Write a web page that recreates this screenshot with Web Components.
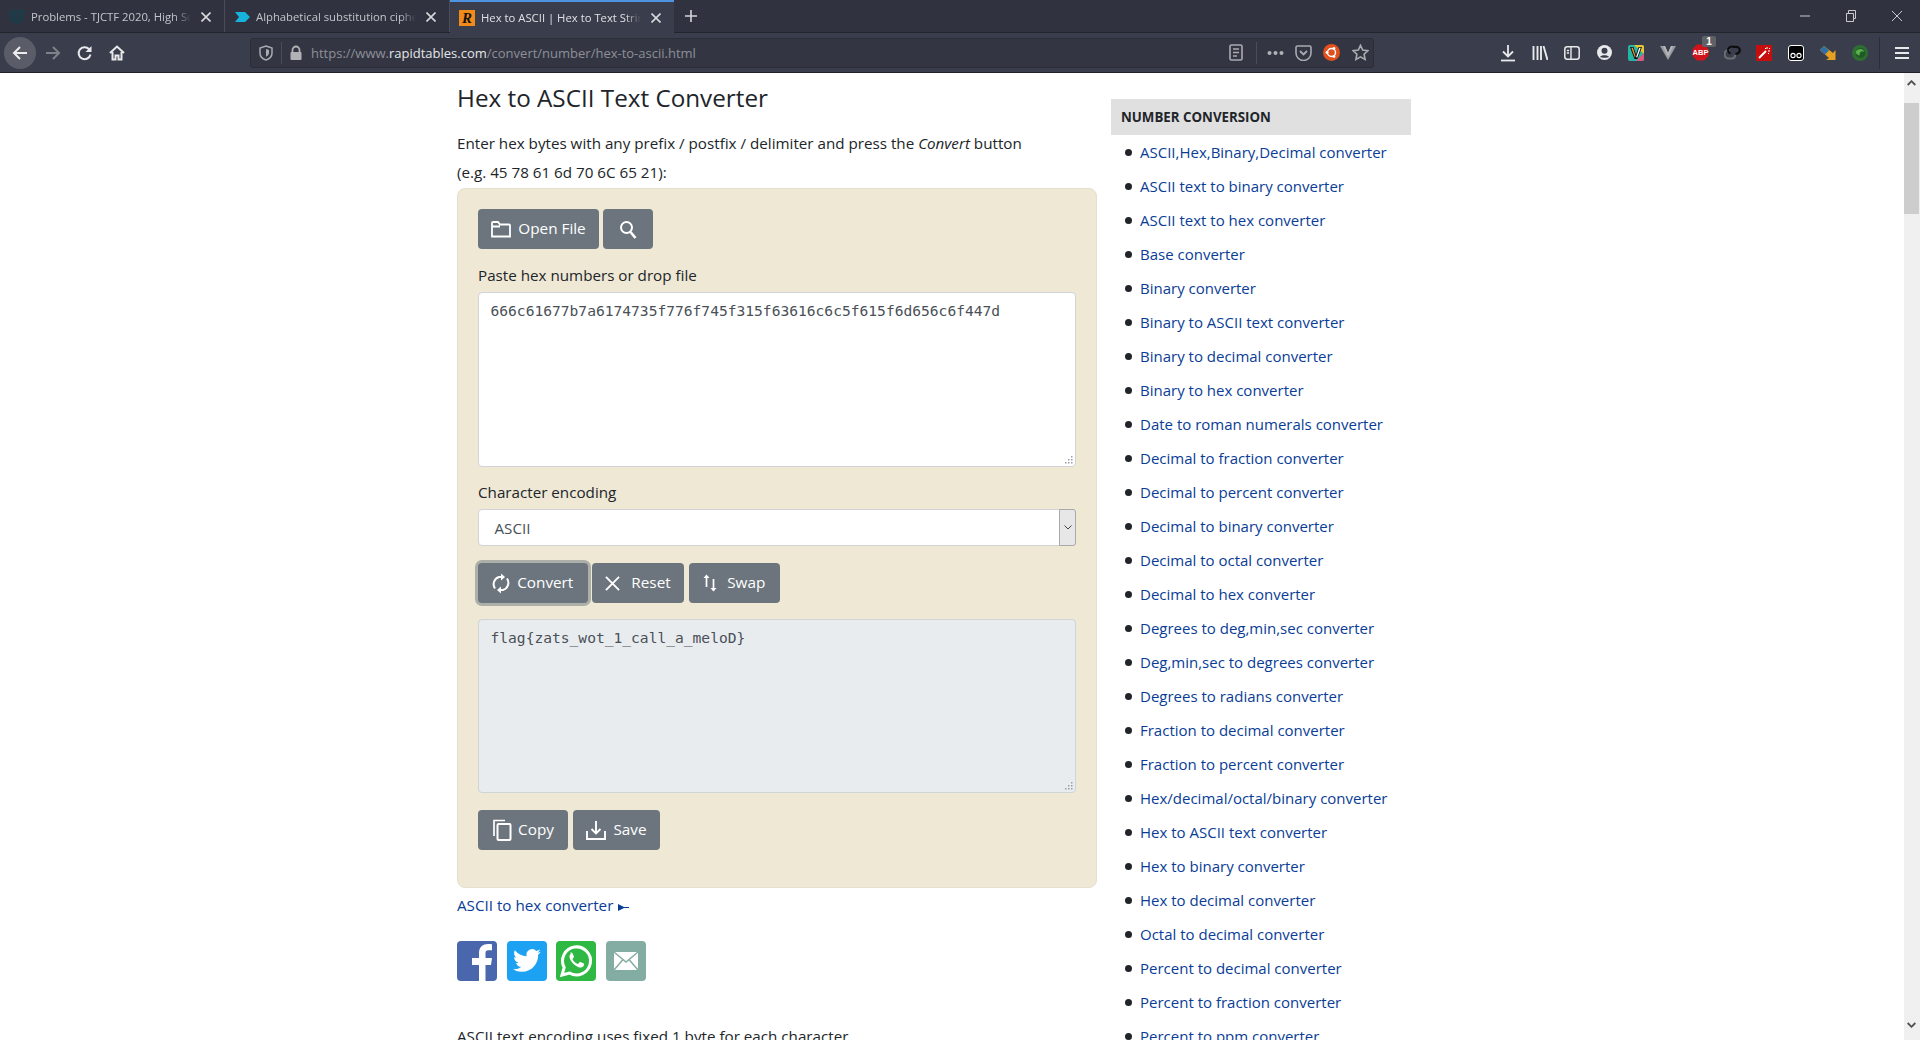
<!DOCTYPE html>
<html lang="en"><head><meta charset="utf-8"><title>Hex to ASCII</title>
<style>
html,body{margin:0;height:100%;overflow:hidden;background:#fff;font-family:"Open Sans","Noto Sans",sans-serif;color:#212529}
body{display:flex;flex-direction:column;height:1040px}
</style></head><body>
<template id="t-chrome"><style>
:host{display:block;flex:none;background:#30333f;color:#d4d5d9}
.strip{display:flex;height:33px;box-sizing:border-box;border-bottom:1px solid #23252e}
.plus{width:34px;display:flex;align-items:center;justify-content:center}
.spacer{flex:1}
.win{display:flex}
.win span{width:46px;height:32px;display:flex;align-items:center;justify-content:center}
.nav{height:40px;box-sizing:border-box;background:#3a3d4b;display:flex;align-items:center;border-bottom:1px solid #1f2128}
.left{display:flex;align-items:center;width:250px;flex:none;padding-left:4px;box-sizing:border-box}
.back{width:32px;height:32px;border-radius:50%;background:#5a5d68;display:flex;align-items:center;justify-content:center}
.ic{width:32px;height:32px;display:flex;align-items:center;justify-content:center;flex:none}
.url{width:1124px;height:30px;flex:none;box-sizing:border-box;background:#333642;border:1px solid #2b2d37;border-radius:3px;display:flex;align-items:center;font-size:13px;color:#8d8f98}
.sep{width:1px;height:22px;background:#4b4e5a;flex:none}
.addr{flex:1;white-space:nowrap;margin-left:1px}
.addr b{font-weight:400;color:#e4e5e8}
.right{display:flex;align-items:center;margin-left:118px}
.r{width:32px;height:32px;display:flex;align-items:center;justify-content:center;flex:none;position:relative}
.vsep{width:1px;height:32px;background:#2b2d37;margin:0 5px 0 3px;flex:none}
.badge{position:absolute;top:-1px;right:0;min-width:10px;height:11px;padding:0 2px;background:#5f6165;border-radius:2px;color:#fff;font:700 10px/11px "Liberation Sans",sans-serif;text-align:center}
.abp{font:700 7.500px "Liberation Sans",sans-serif;fill:#fff}
</style>
<div class="strip"><slot name="tabs"></slot>
<span class="plus"><svg width="16" height="16" viewBox="0 0 16 16"><path d="M8 2v12M2 8h12" stroke="#d4d5d9" stroke-width="1.600"/></svg></span>
<span class="spacer"></span>
<span class="win">
<span><svg width="12" height="12" viewBox="0 0 12 12"><path d="M1 6h10" stroke="#c9cad0"/></svg></span>
<span><svg width="12" height="12" viewBox="0 0 12 12"><path d="M1.500 3.500h7v8h-7zM3.500 3V.5h7v8H9" stroke="#c9cad0" fill="none"/></svg></span>
<span><svg width="12" height="12" viewBox="0 0 12 12"><path d="M1 1l10 10M11 1L1 11" stroke="#c9cad0"/></svg></span>
</span></div>
<div class="nav">
<div class="left">
<span class="back"><svg width="16" height="16" viewBox="0 0 16 16"><path d="M15 8H2M8 2L2 8l6 6" fill="none" stroke="#eceded" stroke-width="2"/></svg></span>
<span class="ic" style="margin-left:1px"><svg width="16" height="16" viewBox="0 0 16 16"><path d="M1 8h13M8 2l6 6-6 6" fill="none" stroke="#7f818a" stroke-width="2"/></svg></span>
<span class="ic"><svg width="16" height="16" viewBox="0 0 16 16"><path d="M13.500 9.500A6 6 0 1 1 12 4l1.500 1.500" fill="none" stroke="#e8e9eb" stroke-width="2"/><path d="M14.500 1v6h-6z" fill="#e8e9eb"/></svg></span>
<span class="ic"><svg width="16" height="16" viewBox="0 0 16 16"><path d="M1 8l7-6.500L15 8M3.500 7v7.500h3v-4h3v4h3V7" fill="none" stroke="#e8e9eb" stroke-width="2"/></svg></span>
</div>
<div class="url">
<span class="ic" style="width:30px"><svg width="16" height="16" viewBox="0 0 16 16"><path d="M8 1l6 2v5c0 3.500-3 6-6 7-3-1-6-3.500-6-7V3z" fill="none" stroke="#a9abb1" stroke-width="1.500"/><path d="M8 4l3 1v3c0 1.500-1.500 3-3 3.800z" fill="#a9abb1"/></svg></span>
<span class="sep"></span>
<span class="ic" style="width:28px"><svg width="14" height="16" viewBox="0 0 14 16"><path d="M3.500 7V5a3.500 3.500 0 0 1 7 0v2" fill="none" stroke="#b1b2b6" stroke-width="1.800"/><rect x="1.500" y="7" width="11" height="8" rx="1" fill="#b1b2b6"/></svg></span>
<span class="addr">https://www.<b>rapidtables.com</b>/convert/number/hex-to-ascii.html</span>
<span class="ic" style="width:32px"><svg width="14" height="17" viewBox="0 0 14 17"><rect x="1" y="1" width="12" height="15" rx="1.500" fill="none" stroke="#a9abb1" stroke-width="1.600"/><path d="M4 5h6M4 8.500h6M4 12h4" stroke="#a9abb1" stroke-width="1.400"/></svg></span>
<span class="sep" style="margin:0 3px 0 4px"></span>
<span class="ic" style="width:31px"><svg width="17" height="6" viewBox="0 0 17 6"><g fill="#b1b2b6"><circle cx="2.500" cy="3" r="2"/><circle cx="8.500" cy="3" r="2"/><circle cx="14.500" cy="3" r="2"/></g></svg></span>
<span class="ic" style="width:25px"><svg width="17" height="16" viewBox="0 0 17 16"><path d="M2.500 1h12a1.500 1.500 0 0 1 1.500 1.500V8a7.500 7.500 0 0 1-15 0V2.500A1.500 1.500 0 0 1 2.500 1z" fill="none" stroke="#a9abb1" stroke-width="1.600"/><path d="M5 6l3.500 3.500L12 6" fill="none" stroke="#a9abb1" stroke-width="1.800"/></svg></span>
<span class="ic" style="width:31px"><svg width="17" height="17" viewBox="0 0 17 17"><circle cx="8.500" cy="8.500" r="8.500" fill="#e2501d"/><circle cx="8.500" cy="8.500" r="4" fill="none" stroke="#fff" stroke-width="1.500"/><circle cx="4" cy="8.500" r="1.400" fill="#fff"/><circle cx="11" cy="4.500" r="1.400" fill="#fff"/><circle cx="11" cy="12.500" r="1.400" fill="#fff"/></svg></span>
<span class="ic" style="width:26px"><svg width="17" height="17" viewBox="0 0 17 17"><path d="M8.500 1.300l2.200 4.800 5.200.6-3.800 3.500 1 5.200-4.600-2.600-4.600 2.600 1-5.200L1.100 6.700l5.200-.6z" fill="none" stroke="#a9abb1" stroke-width="1.600"/></svg></span>
</div>
<div class="right">
<span class="r"><svg width="16" height="18" viewBox="0 0 16 18"><path d="M8 1v11M3 7.500l5 5 5-5" fill="none" stroke="#e8e9eb" stroke-width="1.800"/><path d="M1 16.500h14" stroke="#e8e9eb" stroke-width="1.800"/></svg></span>
<span class="r"><svg width="16" height="14" viewBox="0 0 16 14"><path d="M1.500 0v14M5.500 0v14M9 0v14M11.500 0l4 14" fill="none" stroke="#e8e9eb" stroke-width="1.900"/></svg></span>
<span class="r"><svg width="16" height="14" viewBox="0 0 16 14"><rect x=".8" y=".8" width="14.400" height="12.400" rx="2.500" fill="none" stroke="#e8e9eb" stroke-width="1.500"/><path d="M7 1v12M2.800 4.500h2.300M2.800 7h2.300" stroke="#e8e9eb" stroke-width="1.400"/></svg></span>
<span class="r"><svg width="15" height="15" viewBox="0 0 15 15"><circle cx="7.500" cy="7.500" r="7.500" fill="#e8e9eb"/><circle cx="7.500" cy="5.800" r="3" fill="#3a3d4b"/><path d="M3 12c1-2.300 8-2.300 9 0-1.500 1-7.500 1-9 0z" fill="#3a3d4b"/></svg></span>
<span class="r"><svg width="16" height="16" viewBox="0 0 16 16"><rect width="16" height="16" rx="2" fill="#25b5a6"/><path d="M6 0h8a2 2 0 0 1 2 2v7z" fill="#e9c62f"/><path d="M8 16h6a2 2 0 0 0 2-2V8z" fill="#e2557f"/><path d="M2 2h3.500L8 9.500 10.500 2H14L9.500 14h-3z" fill="#111"/><path d="M3.300 2.800h1.600L7.500 11l-.5 1.800z" fill="#f2932c"/><path d="M12.800 2.800h-1.600L8.300 11.500l.7 1.500z" fill="#fff"/></svg></span>
<span class="r"><svg width="16" height="14" viewBox="0 0 16 14"><path d="M0 0h5l3 7 3-7h5L8 14z" fill="#9a9ba0"/><path d="M5 0l3 7 3-7 2 0L8 11 3 0z" fill="#b8b9bc"/></svg></span>
<span class="r"><svg width="17" height="17" viewBox="0 0 17 17"><path d="M5 .5h7L16.500 5v7L12 16.500H5L.5 12V5z" fill="#d1131b"/><text class="abp" x="8.500" y="11.300" text-anchor="middle">ABP</text></svg><span class="badge">1</span></span>
<span class="r"><svg width="17" height="16" viewBox="0 0 17 16"><path d="M6 5H4.800a3.800 3.800 0 0 0 0 8.500H8a3 3 0 0 0 3-3.500" fill="none" stroke="#6c6e73" stroke-width="2.200"/><path d="M6.500 8.500A3.200 3.200 0 0 1 9 1.800h3a3.400 3.400 0 0 1 2.500 6c-.8.800-2 1-3 .9" fill="none" stroke="#0d0d0f" stroke-width="2.200"/></svg></span>
<span class="r"><svg width="16" height="16" viewBox="0 0 16 16"><rect width="16" height="16" fill="#c60e0e"/><path d="M3 13l7-7" stroke="#fff" stroke-width="2"/><path d="M11 2v2M13 4l1-1M9 3l1 1M14 6h-2M12 8l1 1" stroke="#fff"/></svg></span>
<span class="r"><svg width="16" height="16" viewBox="0 0 16 16"><rect x=".5" y=".5" width="15" height="15" rx="2.500" fill="#000" stroke="#fff"/><circle cx="5" cy="10.500" r="2.100" fill="none" stroke="#fff" stroke-width="1.100"/><circle cx="11" cy="10.500" r="2.100" fill="none" stroke="#fff" stroke-width="1.100"/></svg></span>
<span class="r"><svg width="16" height="16" viewBox="0 0 16 16"><path d="M4 1L0 5l9 8-3 2h9.500V5L13 8z" fill="#e8a020"/><path d="M4 1L0 5l5 4.500 4-4z" fill="#2d6fa8"/></svg></span>
<span class="r"><svg width="16" height="16" viewBox="0 0 16 16"><circle cx="8" cy="8" r="8" fill="#2f6e33"/><circle cx="8.500" cy="8" r="5" fill="#1f5a24"/><path d="M3.500 7c2-4 7.500-4 9 0-2.500-1.500-5-.5-5 3.500C5.500 10 4 9 3.500 7z" fill="#58b04f"/></svg></span>
<span class="vsep"></span>
<span class="r" style="width:34px"><svg width="14" height="12" viewBox="0 0 14 12"><path d="M0 1h14M0 6h14M0 11h14" stroke="#e8e9eb" stroke-width="2"/></svg></span>
</div>
</div>
</template>

<template id="t-tab"><style>
:host{display:flex;align-items:center;height:32px;box-sizing:border-box;width:225px;font-size:11.300px;color:#c3c5cb;position:relative;flex:none;border-right:1px solid #4a4d58;padding-top:1px}
:host([active]){background:#3a3d4b;border-right:0;border-top:2px solid #4f94e0;height:33px;width:224px;color:#e0e1e4;padding-top:0}
.fav{width:16px;height:16px;margin:0 6px 0 9px;flex:none;display:flex}
.t{flex:1;min-width:0;white-space:nowrap;overflow:hidden;-webkit-mask-image:linear-gradient(90deg,#000 90%,transparent);mask-image:linear-gradient(90deg,#000 90%,transparent)}
.x{width:24px;height:24px;margin:0 6px 0 3px;display:flex;align-items:center;justify-content:center;flex:none}
</style><span class="fav"><slot name="fav"></slot></span><span class="t"><slot></slot></span>
<span class="x"><svg width="10" height="10" viewBox="0 0 10 10"><path d="M.5.5l9 9M9.500.5l-9 9" stroke="#d8d9dc" stroke-width="1.600"/></svg></span></template>

<template id="t-btn"><style>
:host{display:inline-flex;flex:none;height:40px;box-sizing:border-box;background:#6c757d;border-radius:4px;color:#fff;font-size:15.300px;align-items:center;justify-content:center;gap:7px;padding-bottom:2px}
:host([focus]){box-shadow:0 0 0 3px rgba(108,117,125,.5)}
.i{display:flex;margin-bottom:-2px}
</style><span class="i"><slot name="i"></slot></span><slot></slot></template>

<template id="t-box"><style>
:host{display:block;box-sizing:border-box;border:1px solid #ced4da;border-radius:4px;background:#fff;padding:7px 12px 7px 11.500px;font:14.600px/22px "DejaVu Sans Mono",monospace;color:#495057;position:relative}
:host([ro]){background:#e9ecef}
svg{position:absolute;right:2px;bottom:2px}
</style><slot></slot><svg width="9" height="9" viewBox="0 0 9 9"><g fill="#9a9fa5"><rect x="7" y="1" width="1.500" height="1.500"/><rect x="4" y="4" width="1.500" height="1.500"/><rect x="7" y="4" width="1.500" height="1.500"/><rect x="1" y="7" width="1.500" height="1.500"/><rect x="4" y="7" width="1.500" height="1.500"/><rect x="7" y="7" width="1.500" height="1.500"/></g></svg></template>

<template id="t-sel"><style>
:host{display:flex;height:37px;box-sizing:border-box;border:1px solid #ced4da;border-radius:4px;background:#fff;font-size:15.200px;color:#495057;align-items:center;padding-left:15.500px}
.t{flex:1}
.a{width:17px;align-self:stretch;box-sizing:border-box;background:#e7e7e7;border:1px solid #a9a9a9;border-radius:0 3px 3px 0;display:flex;align-items:center;justify-content:center;margin:-1px -1px -1px 0}
</style><span class="t"><slot></slot></span><span class="a"><svg width="8" height="5" viewBox="0 0 8 5"><path d="M.5.500L4 4 7.500.5" fill="none" stroke="#444"/></svg></span></template>

<template id="t-panel"><style>
:host{display:block;box-sizing:border-box;height:700px;background:#eee8d5;border:1px solid #e4dfcf;border-radius:8px;padding:20px 20px 0 20px}
</style><slot></slot></template>

<template id="t-row"><style>:host{display:flex}</style><slot></slot></template>

<template id="t-share"><style>
:host{display:block;width:40px;height:40px;border-radius:4px;overflow:hidden;flex:none}
</style><slot></slot></template>

<template id="t-side"><style>
:host{display:block;padding-top:26px}
.h{height:36px;background:#e0e0e0;font-weight:700;font-size:13.300px;line-height:37px;padding-left:10px;color:#212529}
</style><div class="h"><slot name="h"></slot></div><slot></slot></template>

<template id="t-link"><style>
:host{display:flex;align-items:center;height:34px;font-size:15px;color:#0a3d96;white-space:nowrap}
.b{width:7px;height:7px;border-radius:50%;background:#212529;margin:0 8px 0 14px;flex:none}
</style><span class="b"></span><slot></slot></template>

<template id="t-scroll"><style>
:host{display:flex;flex-direction:column;width:16px;flex:none;background:#f0f0f0;align-items:stretch}
.a{height:30px;display:flex;align-items:flex-start;justify-content:center;flex:none;padding-right:1px;box-sizing:border-box;padding-top:7px}
.thumb{height:111px;background:#cdcdcd;margin-right:1px;flex:none}
.f{flex:1}
</style><span class="a"><svg width="9" height="6" viewBox="0 0 9 6"><path d="M.7 5L4.500 1.200 8.300 5" fill="none" stroke="#505050" stroke-width="1.800"/></svg></span><span class="thumb"></span><span class="f"></span><span class="a" style="height:24px;padding-top:6px"><svg width="9" height="6" viewBox="0 0 9 6"><path d="M.7 1L4.500 4.800 8.300 1" fill="none" stroke="#505050" stroke-width="1.800"/></svg></span></template>

<template id="t-page"><style>
:host{display:flex;flex:1;min-height:0;overflow:hidden}
.scroller{flex:1;min-width:0;overflow:hidden;display:grid;grid-template-columns:640px 300px;column-gap:14px;padding-left:457px;align-content:start}
</style><div class="scroller"><slot name="main"></slot><slot name="side"></slot></div><slot name="bar"></slot></template>

<template id="t-main"><style>
:host{display:block;font-size:15.200px}
</style><slot></slot></template>

<script>
const def=(n,t)=>customElements.define(n,class extends HTMLElement{constructor(){super();this.attachShadow({mode:"open"}).appendChild(document.getElementById(t).content.cloneNode(true))}});
def("browser-chrome","t-chrome");def("browser-tab","t-tab");def("ui-btn","t-btn");def("text-box","t-box");def("select-box","t-sel");def("tool-panel","t-panel");def("btn-row","t-row");def("share-btn","t-share");def("side-menu","t-side");def("side-link","t-link");def("scroll-bar","t-scroll");def("page-area","t-page");def("main-col","t-main");
</script>

<browser-chrome>
<div slot="tabs" style="display:flex">
<browser-tab><svg slot="fav" width="16" height="16" viewBox="0 0 16 16"><path d="M1 1h14v7c0 3-3 6-7 7-4-1-7-4-7-7z" fill="#1d3c4a"/><path d="M5 3v7M8 3v10M11 3v7" stroke="#30333f"/></svg>Problems - TJCTF 2020, High Sc</browser-tab>
<browser-tab><svg slot="fav" width="16" height="16" viewBox="0 0 16 16"><path d="M1 3h10l5 5-5 5H1l4-5z" fill="#16b4dc"/></svg>Alphabetical substitution ciphe</browser-tab>
<browser-tab active><span slot="fav" style="display:block;width:16px;height:16px;background:#f08a19;color:#111;font:italic 700 15px/16px 'Liberation Serif',serif;text-align:center;overflow:hidden">R</span>Hex to ASCII | Hex to Text Strin</browser-tab>
</div>
</browser-chrome>

<page-area>
<main-col slot="main">
<div style="font-size:24.250px;line-height:40px;margin:5px 0 11px">Hex to ASCII Text Converter</div>
<div style="line-height:29px">Enter hex bytes with any prefix / postfix / delimiter and press the <i>Convert</i> button</div>
<div style="line-height:29px;margin-bottom:1px">(e.g. 45 78 61 6d 70 6C 65 21):</div>
<tool-panel>
<btn-row style="gap:4px">
<ui-btn style="width:121px"><svg slot="i" width="20" height="18" viewBox="0 0 20 18"><path d="M1 16.500V3a1 1 0 0 1 1-1h5l2 2.500h9a1 1 0 0 1 1 1v11zM1 6.500h8" fill="none" stroke="#fff" stroke-width="1.800"/></svg>Open File</ui-btn>
<ui-btn style="width:50px"><svg slot="i" width="18" height="19" viewBox="0 0 18 19"><circle cx="7.500" cy="7.500" r="5.500" fill="none" stroke="#fff" stroke-width="2"/><path d="M11.500 12l5 6" stroke="#fff" stroke-width="2.600"/></svg></ui-btn>
</btn-row>
<div style="line-height:24px;margin:14px 0 5px">Paste hex numbers or drop file</div>
<text-box style="height:175px">666c61677b7a6174735f776f745f315f63616c6c5f615f6d656c6f447d</text-box>
<div style="line-height:24px;margin:13px 0 5px">Character encoding</div>
<select-box>ASCII</select-box>
<btn-row style="gap:4.500px;margin-top:17px">
<ui-btn focus style="width:109.500px"><svg slot="i" width="18" height="21" viewBox="0 0 18 21"><path d="M3 15.500A7.500 7.500 0 0 1 7 4h3M15 5.500A7.500 7.500 0 0 1 11 17H8" fill="none" stroke="#fff" stroke-width="2"/><path d="M9 .5v7l4-3.500zM9 20.500v-7l-4 3.500z" fill="#fff"/></svg>Convert</ui-btn>
<ui-btn style="width:92px;gap:11px"><svg slot="i" width="15" height="15" viewBox="0 0 16 16"><path d="M1 1l14 14M15 1L1 15" stroke="#fff" stroke-width="2"/></svg>Reset</ui-btn>
<ui-btn style="width:91.500px;gap:10px"><svg slot="i" width="14" height="18" viewBox="0 0 14 18"><path d="M3.500 13V2M10.500 5v11.500" stroke="#fff" stroke-width="1.700"/><path d="M.5 4l3-3.500L6.500 4zM7.500 14l3 3.500 3-3.500z" fill="#fff"/></svg>Swap</ui-btn>
</btn-row>
<text-box ro style="height:174px;margin-top:16px">flag{zats_wot_1_call_a_meloD}</text-box>
<btn-row style="gap:5px;margin-top:17px">
<ui-btn style="width:90px;gap:6px"><svg slot="i" width="20" height="22" viewBox="0 0 20 22"><path d="M2 17V1.500h11" fill="none" stroke="#fff" stroke-width="1.700"/><rect x="5.500" y="5" width="13" height="16" rx="1" fill="none" stroke="#fff" stroke-width="2"/></svg>Copy</ui-btn>
<ui-btn style="width:87px;gap:7px"><svg slot="i" width="20" height="20" viewBox="0 0 20 20"><path d="M1 11v8h18v-8" fill="none" stroke="#fff" stroke-width="1.900"/><path d="M10 1v12M5.500 9l4.500 4.500L14.500 9" fill="none" stroke="#fff" stroke-width="1.900"/></svg>Save</ui-btn>
</btn-row>
</tool-panel>
<div style="line-height:28px;margin-top:3px;color:#0a3d96">ASCII to hex converter <svg width="11" height="7" viewBox="0 0 11 7" style="margin-left:1px"><path d="M0 0l6 3h5v1H6L0 7z" fill="#0a3d96"/></svg></div>
<btn-row style="gap:9.500px;margin-top:22px">
<share-btn style="background:#4a66ad"><svg width="40" height="40" viewBox="0 0 40 40"><path d="M22 40V24h-7v-7h7v-5c0-6 4-9 9-9 1.500 0 3.500.2 4 .3v6h-3.500c-2.500 0-3 1.200-3 3V17h6.500l-1 7h-5.500v16z" fill="#fff"/></svg></share-btn>
<share-btn style="background:#1da1f2"><svg width="40" height="40" viewBox="0 0 24 24"><path transform="translate(2.800 2.800) scale(.76)" d="M23 4.900a9 9 0 0 1-2.600.7 4.500 4.500 0 0 0 2-2.500 9 9 0 0 1-2.900 1.100 4.500 4.500 0 0 0-7.700 4.100A12.800 12.800 0 0 1 2.500 3.600a4.500 4.500 0 0 0 1.400 6 4.500 4.500 0 0 1-2-.6c0 2.200 1.500 4.100 3.600 4.500a4.500 4.500 0 0 1-2 .1 4.500 4.500 0 0 0 4.200 3.100A9 9 0 0 1 1 18.600 12.800 12.800 0 0 0 8 20.600c8.300 0 12.900-6.900 12.900-12.900v-.6A9 9 0 0 0 23 4.900z" fill="#fff"/></svg></share-btn>
<share-btn style="background:#2fb944"><svg width="40" height="40" viewBox="0 0 40 40"><path d="M6 34l2.200-7.500A14 14 0 1 1 13.500 32z" fill="none" stroke="#fff" stroke-width="3"/><path d="M15 12.500c-1.500 1-2 3-1 5.500 1.500 3.500 4.500 6.500 8 8 2.500 1 4.500.5 5.500-1 .7-1 .7-2 .3-2.400l-3.300-1.600c-.5-.2-.9 0-1.200.5l-1 1.200c-.3.300-.7.300-1.100.1-2-.9-3.500-2.400-4.500-4.400-.2-.4-.1-.7.200-1l.8-1c.3-.4.300-.8.100-1.200l-1.300-3c-.3-.7-1.500-.8-2.500-.7z" fill="#fff"/></svg></share-btn>
<share-btn style="background:#83ada3"><svg width="40" height="40" viewBox="0 0 40 40"><rect x="8" y="11" width="24" height="18" fill="#fff"/><path d="M8 11l12 10 12-10M8 29l9-10.500M32 29l-9-10.500" fill="none" stroke="#83ada3" stroke-width="1.500"/></svg></share-btn>
</btn-row>
<div style="line-height:28px;margin-top:41px;white-space:nowrap">ASCII text encoding uses fixed 1 byte for each character.</div>
</main-col>
<side-menu slot="side"><span slot="h">NUMBER CONVERSION</span>
<side-link>ASCII,Hex,Binary,Decimal converter</side-link>
<side-link>ASCII text to binary converter</side-link>
<side-link>ASCII text to hex converter</side-link>
<side-link>Base converter</side-link>
<side-link>Binary converter</side-link>
<side-link>Binary to ASCII text converter</side-link>
<side-link>Binary to decimal converter</side-link>
<side-link>Binary to hex converter</side-link>
<side-link>Date to roman numerals converter</side-link>
<side-link>Decimal to fraction converter</side-link>
<side-link>Decimal to percent converter</side-link>
<side-link>Decimal to binary converter</side-link>
<side-link>Decimal to octal converter</side-link>
<side-link>Decimal to hex converter</side-link>
<side-link>Degrees to deg,min,sec converter</side-link>
<side-link>Deg,min,sec to degrees converter</side-link>
<side-link>Degrees to radians converter</side-link>
<side-link>Fraction to decimal converter</side-link>
<side-link>Fraction to percent converter</side-link>
<side-link>Hex/decimal/octal/binary converter</side-link>
<side-link>Hex to ASCII text converter</side-link>
<side-link>Hex to binary converter</side-link>
<side-link>Hex to decimal converter</side-link>
<side-link>Octal to decimal converter</side-link>
<side-link>Percent to decimal converter</side-link>
<side-link>Percent to fraction converter</side-link>
<side-link>Percent to ppm converter</side-link>
</side-menu>
<scroll-bar slot="bar"></scroll-bar>
</page-area>
</body></html>
